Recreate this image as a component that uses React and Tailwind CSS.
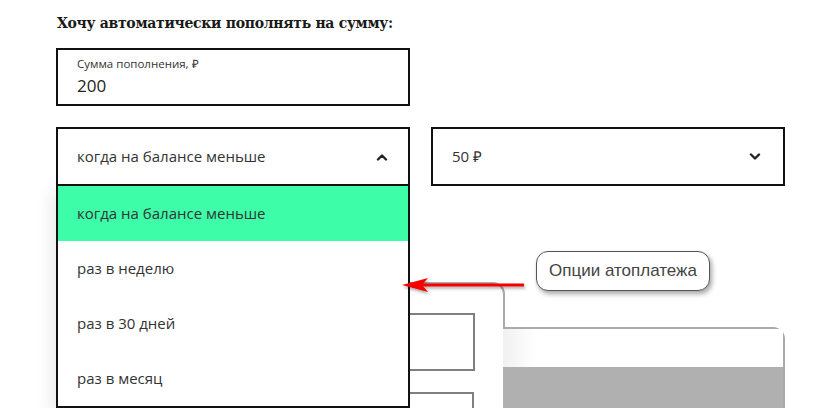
import React from "react";

const ChevronUp = () => (
  <svg width="12" height="8" viewBox="0 0 12 8" fill="none">
    <polyline points="2,6.5 6,2.5 10,6.5" stroke="#222" strokeWidth="2.4" strokeLinecap="round" strokeLinejoin="round" />
  </svg>
);

const ChevronDown = () => (
  <svg width="12" height="8" viewBox="0 0 12 8" fill="none">
    <polyline points="2,1.5 6,5.5 10,1.5" stroke="#222" strokeWidth="2.4" strokeLinecap="round" strokeLinejoin="round" />
  </svg>
);

const options = ["когда на балансе меньше", "раз в неделю", "раз в 30 дней", "раз в месяц"];

export default function App() {
  return (
    <div className="relative w-[831px] h-[408px] overflow-hidden bg-white text-[#222] font-['Open_Sans',sans-serif]">
      <div className="pl-[56px] pt-[12px]">
        <h2 className="ml-px text-[14px] leading-[22px] font-bold font-['DejaVu_Serif',serif] text-[#1a1a1a] tracking-[-0.3px]">
          Хочу автоматически пополнять на сумму:
        </h2>

        <div className="mt-[14px] w-[354px] h-[58px] border-2 border-[#111] pl-[19px] pt-[6px]">
          <div className="text-[11.5px] leading-[16px] text-[#333]">Сумма пополнения, ₽</div>
          <div className="mt-[2px] text-[17px] leading-[24px] text-[#222]">200</div>
        </div>

        <div className="mt-[21px] flex gap-[21px]">
          <div className="w-[354px] h-[59px] border-2 border-[#111] pl-[19px] pr-[20px] flex items-center justify-between">
            <span className="text-[15px] text-[#333]">когда на балансе меньше</span>
            <ChevronUp />
          </div>
          <div className="w-[354px] h-[59px] border-2 border-[#111] pl-[19px] pr-[22px] flex items-center justify-between">
            <span className="text-[15px] text-[#333]">50 ₽</span>
            <ChevronDown />
          </div>
        </div>

        {/* faded content under the menu */}
        <div className="mt-[96px] flex items-start">
          <div className="w-[449px] h-[200px] border-t-2 border-r-2 border-[#aaa] rounded-tr-[12px] pt-[29px]">
            <div className="w-[419px] h-[58px] border-2 border-[#808080]"></div>
            <div className="mt-[21px] w-[418px] h-[58px] border-2 border-[#808080]"></div>
          </div>
          <div className="mt-[45px] -ml-[2px] w-[282px] h-[120px] border-t-2 border-r-2 border-[#aaa] rounded-tr-[12px] flex flex-col">
            <div className="h-[38px] bg-gradient-to-r from-[#f1f1f1] via-white via-[12%] to-white"></div>
            <div className="flex-1 bg-[#b0b0b0]"></div>
          </div>
        </div>
      </div>

      {/* dropdown menu */}
      <div className="absolute left-[56px] top-[186px] w-[354px] bg-white border-x-2 border-b-2 border-[#111] shadow-[-6px_6px_14px_rgba(0,0,0,0.08)]">
        {options.map((o, i) => (
          <div
            key={o}
            className={`h-[55px] pl-[19px] flex items-center text-[15px] text-[#333] ${i === 0 ? "bg-[#3dfda9]" : "bg-white"}`}>
            {o}
          </div>
        ))}
      </div>

      {/* annotation */}
      <div className="absolute left-[536px] top-[251px] w-[174px] h-[40px] rounded-[12px] border-[1.5px] border-[#555] bg-white shadow-[2px_3px_5px_rgba(0,0,0,0.35)] flex items-center justify-center">
        <span className="text-[17px] text-[#444] font-['Liberation_Sans',Arial,sans-serif]">Опции атоплатежа</span>
      </div>
      <svg className="absolute left-[398px] top-[272px]" width="134" height="26" viewBox="0 0 134 26">
        <defs>
          <filter id="sh" x="-10%" y="-50%" width="120%" height="200%">
            <feDropShadow dx="1" dy="2" stdDeviation="1.5" floodColor="#000" floodOpacity="0.35" />
          </filter>
        </defs>
        <g filter="url(#sh)">
          <rect x="20" y="11.5" width="106" height="3" fill="#f40000" />
          <path d="M4 13 L30 6 L24 13 L30 20 Z" fill="#f40000" />
        </g>
      </svg>
    </div>
  );
}
